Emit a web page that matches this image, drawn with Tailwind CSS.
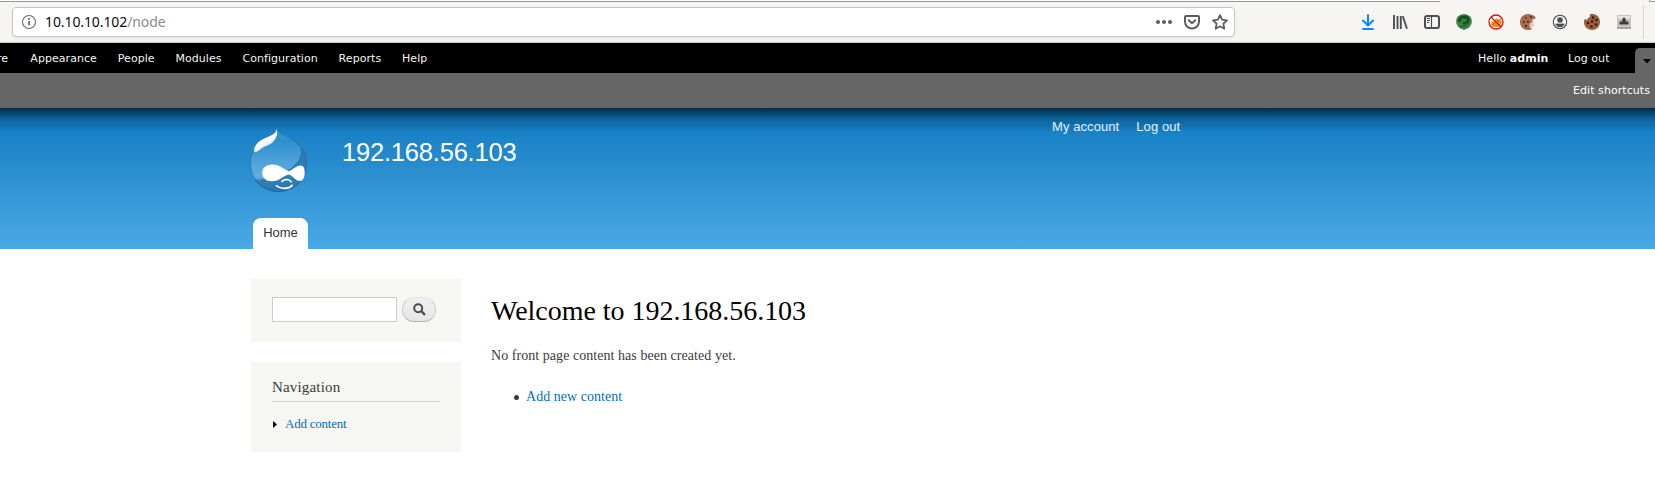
<!DOCTYPE html>
<html lang="en">
<head>
<meta charset="utf-8">
<title>192.168.56.103</title>
<script src="https://cdn.jsdelivr.net/npm/@tailwindcss/browser@4"></script>
</head>
<body class="w-[1655px] h-[493px] overflow-hidden bg-white font-['Liberation_Serif',serif] text-[#3b3b3b]">
<!-- Browser toolbar -->
<div class="relative h-[43px] bg-[#f6f5f3] border-b border-[#c9c9c4] flex pt-[7px] pl-3 font-['Noto_Sans',sans-serif]">
  <div class="absolute left-0 top-0 w-[1440px] h-[2px] bg-white border-b border-[#999995]"></div>
  <div class="absolute left-[1649px] top-0 w-[6px] h-[2px] border-b border-l border-[#999995]"></div>
  <div class="w-[1223px] h-[30px] rounded-[4px] border border-[#c9c4c0] bg-white shadow-[0_1px_3px_rgba(0,0,0,0.06)] flex items-center pl-[8px] pr-[6px]">
    <svg class="w-4 h-4" viewBox="0 0 16 16" fill="none"><circle cx="8" cy="8" r="6.500" stroke="#6a6a6a" stroke-width="1.1"/><path d="M8 7v4.2M8 4.3v1.6" stroke="#6a6a6a" stroke-width="1.8"/></svg>
    <div class="ml-[8px] text-[14px] tracking-[-0.1px] leading-5 text-[#8a8a8a]"><span class="text-[#0c0c0d]">10.10.10.102</span>/node</div>
    <div class="ml-auto flex items-center gap-3">
      <svg class="w-4 h-4" viewBox="0 0 16 16" fill="#5c5c5e"><circle cx="2" cy="8" r="2"/><circle cx="8" cy="8" r="2"/><circle cx="14" cy="8" r="2"/></svg>
      <svg class="w-4 h-4" viewBox="0 0 16 16" fill="none" stroke="#5c5c5e" stroke-width="2" stroke-linecap="round" stroke-linejoin="round"><path d="M2 2h12a1 1 0 0 1 1 1v4.5a7 7 0 0 1-14 0V3a1 1 0 0 1 1-1z"/><path d="M4.8 6.2L8 9.2l3.2-3"/></svg>
      <svg class="w-4 h-4" viewBox="0 0 16 16" fill="none" stroke="#5c5c5e" stroke-width="1.8" stroke-linejoin="round"><path d="M8 1.2l2.1 4.5 4.9.6-3.6 3.4.9 5L8 12.300l-4.3 2.400.9-5L1 6.300l4.900-.6z"/></svg>
    </div>
  </div>
  <div class="ml-[125px] mt-[7px] h-4 flex gap-4">
    <svg class="w-4 h-4" viewBox="0 0 16 16" fill="none" stroke="#0a84ff" stroke-width="2" stroke-linecap="round" stroke-linejoin="round"><path d="M8 1v10M3 6.500l5 5 5-5M3 15h10"/></svg>
    <svg class="w-4 h-4" viewBox="0 0 16 16" fill="none" stroke="#4c4f50" stroke-width="1.900"><path d="M2 1v14M5.500 2v13M8.800 2v13M10.800 2.200l4.200 12.500"/></svg>
    <svg class="w-4 h-4" viewBox="0 0 16 16" fill="none" stroke="#4c4f50"><rect x="1" y="2" width="14" height="12" rx="2" stroke-width="2"/><path d="M7.500 2v12" stroke-width="1.200"/><path d="M3 4.500h3M3 6.500h3M3 8.500h2" stroke-width="1"/></svg>
    <svg class="w-4 h-4" viewBox="0 0 16 16" fill="none"><path d="M8 0l3.500.8 3 2 1.300 3.200-.3 4-2.500 3.700L8 16l-5-2.300L.5 10 .2 6l1.300-3.200 3-2z" fill="#3a843b"/><path d="M3.500 8q0-5 4.500-5 5 0 4 4-1 3-5 2" stroke="#174d20" stroke-width="2.800"/><path d="M4 12q6 1 8-3" stroke="#286c2d" stroke-width="2"/></svg>
    <svg class="w-4 h-4" viewBox="0 0 16 16" fill="none"><circle cx="8" cy="8" r="7" fill="#fff" stroke="#d81219" stroke-width="1.300"/><path d="M3.500 7l2 .5L8 4l2.500 1.500L12.500 4l1.500 4-2 4-2 1H5l-2-2z" fill="#ee9022"/><path d="M5 10h2M9 7h2M10 11h2" stroke="#a4631c" stroke-width="1.200"/><path d="M3 3l10 10" stroke="#d81219" stroke-width="1.300"/></svg>
    <svg class="w-4 h-4" viewBox="0 0 16 16"><path d="M8 0c3 0 6 1 8 4l-4 2 1 3-2 2 1 4c-6 3-12-1-12-7 0-5 4-8 8-8z" fill="#a66a4d"/><path d="M11 8l3 1v3l-2 1-3-1z" fill="#e7c9b4"/><path d="M5 3h1.500v1.500H5zM10 2h2v1.500h-2zM3 7h1.500v2H3zM7 7h2v1.500H7zM5 11h2v2H5z" fill="#4b2b22"/><path d="M12 9h1v1h-1zM10 13h2v1h-2z" fill="#fff"/></svg>
    <svg class="w-4 h-4" viewBox="0 0 16 16" fill="none"><circle cx="8" cy="8" r="6.700" stroke="#4c4f50" stroke-width="1.100"/><circle cx="8" cy="6" r="2.800" fill="#4c4f50"/><path d="M3.200 9.800q2 .2 2.600-.6 2.200 1.200 4.400 0 .6.800 2.600.6-1.400 3.400-4.800 3.400t-4.800-3.400z" fill="#4c4f50"/></svg>
    <svg class="w-4 h-4" viewBox="0 0 16 16"><path d="M6 0c6-1 10 3 10 8s-4 8-8 8-8-3-8-8c0-1 0-2 1-3l2 1 1-2 2-1z" fill="#9c5d3b"/><g fill="#2b1711"><circle cx="9" cy="3.500" r="1.200"/><circle cx="12.500" cy="6" r="1.200"/><circle cx="8" cy="7.500" r="1.200"/><circle cx="4" cy="9" r="1.200"/><circle cx="12" cy="10.500" r="1.200"/><circle cx="7.500" cy="12.500" r="1.200"/></g></svg>
    <svg class="w-4 h-4" viewBox="0 0 16 16"><rect x="1" y="1" width="14" height="14" rx="1" fill="#c8c2bc"/><path d="M2 2h12v3H2z" fill="#e7e3de"/><path d="M8 3l2.500 3.500H9.500V7.500H12.500v3h-9v-3H6.500V6.500H5.500z" fill="#3c3c3c"/><path d="M1 13h14v2H1z" fill="#a9a29c"/></svg>
  </div>
  <div class="absolute left-[1643px] top-[5px] w-px h-[34px] bg-[#d6d5d2]"></div>
</div>
<!-- Admin toolbar -->
<div class="h-[30px] bg-black flex text-[11px] leading-[32px] tracking-[0.06px] text-[#f4f4f4] font-['DejaVu_Sans',sans-serif] whitespace-nowrap">
  <div class="flex gap-[20.8px] -ml-[3px] w-[1481px] shrink-0">
    <span class="w-[12.5px]">re</span><span>Appearance</span><span>People</span><span>Modules</span><span>Configuration</span><span>Reports</span><span>Help</span>
  </div>
  <span>Hello <b>admin</b></span><span class="ml-[19.5px]">Log out</span>
  <div class="ml-auto mt-[5px] w-5 h-[25px] bg-[#666] rounded-tl-[5px] shrink-0 pl-[8px] pt-[11px]"><svg class="block w-[8px] h-[5px]" viewBox="0 0 8 5"><path d="M0 0h8L4 4.500z" fill="#000"/></svg></div>
</div>
<div class="h-[35px] bg-[#666] text-right pr-[5px] text-[11px] leading-[36px] tracking-[0.06px] text-white font-['DejaVu_Sans',sans-serif]">Edit shortcuts</div>
<!-- Site header -->
<header class="relative h-[141px] bg-linear-to-b from-[#0779bf] to-[#48a9e4] font-['Liberation_Sans',sans-serif]">
  <div class="absolute inset-x-0 top-0 h-6 bg-linear-to-b from-[#001c30]/80 via-[#001c30]/25 via-50% to-transparent"></div>
  <div class="relative h-full flex flex-col justify-between pl-[250px]">
    <div class="flex">
      <svg class="mt-5 w-[57px] h-[64px]" viewBox="0 0 57 64" fill="none">
        <defs>
          <linearGradient id="drop" x1="0" y1="0" x2="0" y2="1"><stop offset="0" stop-color="#3f9ad3"/><stop offset=".2" stop-color="#2e8fcd"/><stop offset=".75" stop-color="#62afe0"/><stop offset="1" stop-color="#3f91c9"/></linearGradient>
          <linearGradient id="shine" x1="0.2" y1="0.2" x2="0.6" y2="0.9"><stop offset=".5" stop-color="#fff"/><stop offset="1" stop-color="#fff" stop-opacity=".75"/></linearGradient>
          <clipPath id="body"><path d="M26.700 .300c1 3 2.500 4.200 5 5.200 4.500 2.500 9.500 4.300 13.300 7.300C52.500 18 57 26 57 35.500 57 52 44.500 64 28.500 64S0 52 0 35.500C0 25.500 4.500 17 10.500 12.500 16 9 20 8 23.300 6c2.200-1.500 3.200-3 3.400-5.700z"/></clipPath>
        </defs>
        <g clip-path="url(#body)">
          <path d="M0 0h57v64H0z" fill="url(#drop)"/>
          <path d="M50 17c3 10-1 18-12 25L28 48 10 51.500H3L0 64h57V17z" fill="#1c6ca6" fill-opacity=".7"/>
          <path d="M26.700 .300c1 3 2.500 4.200 5 5.200 4.500 2.500 9.500 4.300 13.300 7.300C52.500 18 57 26 57 35.500 57 52 44.500 64 28.500 64S0 52 0 35.500C0 25.500 4.500 17 10.500 12.500 16 9 20 8 23.300 6c2.200-1.500 3.200-3 3.400-5.700z" stroke="#2a6592" stroke-opacity=".7" stroke-width="2"/>
        </g>
        <path d="M26.700 .700c.8 3.500.6 6.500-1.200 9.800-1.500 3-4 5.300-7.500 6.700-4.500 1.500-7 3.500-10 5.800-3 2-5 .8-3.500-3C6 15.500 9.500 13 13.300 11 17 9 21 8 23.500 6c2-1.500 3-3 3.200-5.300z" fill="url(#shine)"/>
        <path d="M22 36.600c7.500-.3 11.500 5 17 6.600 4-1.500 7-5.700 11.500-5.700 3.200 0 4.200 3 4.200 7 0 4.500-1.500 8.300-4.700 8.500-4.500 0-7-5.500-11-6.500-6 1-9 6.800-17.500 6.800-6 0-9.200-3.800-9.200-8.300 0-5 3.700-8.200 9.700-8.400z" fill="#fff"/>
        <path d="M32 53.400c2.500-2.500 7-2.600 9.200.3M26.300 57.700c4.500 3.800 12 3.600 16-.4" stroke="#fff" stroke-width="1.700" stroke-linecap="round"/>
      </svg>
      <h1 class="ml-[35px] w-[180px] shrink-0 mt-[29px] text-[25.5px] tracking-[-0.2px] leading-[30px] text-[#fffeff]">192.168.56.103</h1>
      <nav class="ml-[530px] mt-[9px] flex gap-[17px] text-[13px] tracking-[0.08px] leading-5 text-white/90"><span>My account</span><span>Log out</span></nav>
    </div>
    <div class="ml-[3px] w-[55px] h-[31px] rounded-t-[8px] bg-white text-center text-[13px] leading-[29px] text-[#333]">Home</div>
  </div>
</header>
<!-- Page body -->
<main class="flex pl-[251px] pt-[30px]">
  <aside class="w-[210px] flex flex-col gap-5">
    <div class="h-[63px] bg-[#f6f6f2] pl-[21px] pt-[18px] flex gap-[5px]">
      <div class="w-[125px] h-[25px] border border-[#ccc] bg-white"></div>
      <div class="w-[34px] h-[25px] rounded-[12px] border border-[#e4e4e4] border-x-[#ccc] border-b-[#b4b4b4] bg-linear-to-b from-[#f0f0f0] to-[#e6e6e6] flex items-center justify-center">
        <svg class="w-[13px] h-[13px]" viewBox="0 0 13 13" fill="none" stroke="#4d4d4d"><circle cx="5.200" cy="5.200" r="4" stroke-width="2"/><path d="M8.200 8.200l3.800 3.600" stroke-width="2.300"/></svg>
      </div>
    </div>
    <div class="h-[90px] bg-[#f6f6f2] px-[21px] pt-[15px]">
      <h2 class="h-[25px] border-b border-[#d6d6d6] text-[15px] tracking-[0.17px] leading-[21px]">Navigation</h2>
      <div class="mt-[12px] flex items-center text-[13px] tracking-[-0.22px] leading-5 text-[#0071b3]"><svg class="ml-px mr-2 mt-px w-[4px] h-[7px]" viewBox="0 0 4 7"><path d="M0 0l4 3.500L0 7z" fill="#000"/></svg>Add content</div>
    </div>
  </aside>
  <section class="ml-[30px] pt-[15px]">
    <h1 class="text-[28px] tracking-[-0.03px] leading-[34px] text-black">Welcome to 192.168.56.103</h1>
    <p class="mt-[18px] text-[14px] tracking-[0.05px] leading-[20px]">No front page content has been created yet.</p>
    <div class="mt-[21px] pl-[23px] flex items-center text-[14px] tracking-[0.03px] leading-[20px] text-[#0071b3]"><span class="w-[5px] h-[5px] mr-[7px] rounded-full bg-[#3b3b3b]"></span>Add new content</div>
  </section>
</main>
</body>
</html>
